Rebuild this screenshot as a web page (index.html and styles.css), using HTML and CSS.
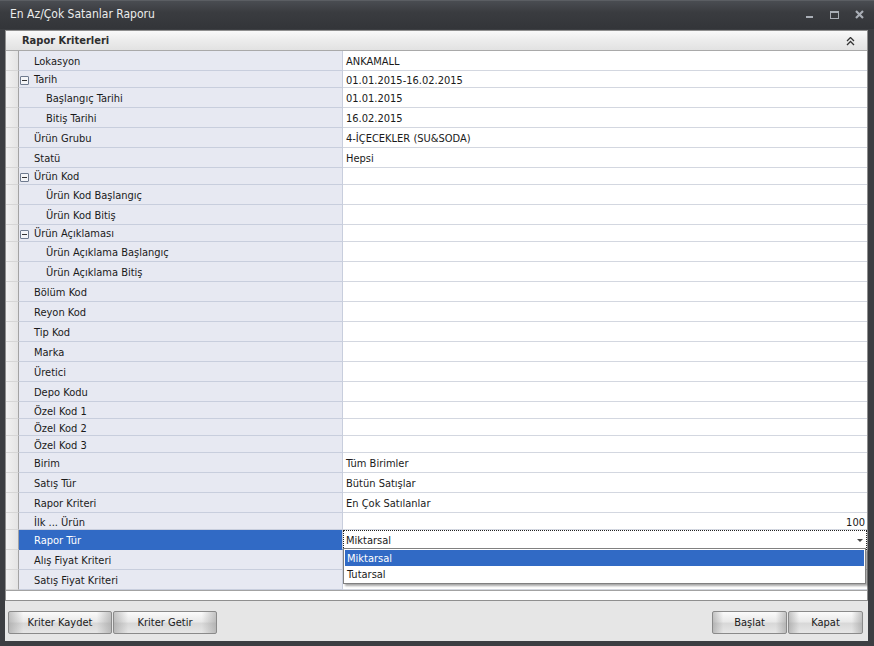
FILE: index.html
```html
<!DOCTYPE html>
<html lang="tr">
<head>
    <meta charset="UTF-8">
    <title>En Az/Çok Satanlar Raporu</title>
    <link rel="stylesheet" href="styles.css">
</head>
<body>

<div class="window">

    <!-- Title bar -->
    <div class="titlebar">
        <span class="title">En Az/Çok Satanlar Raporu</span>
        <div class="controls">
            <svg width="874" height="29" class="ctrl-svg">
                <rect x="806" y="16" width="7" height="2" fill="#a9aeb6"/>
                <rect x="830.5" y="11.5" width="8" height="7" fill="none" stroke="#a9aeb6"/>
                <rect x="830" y="11" width="9" height="2" fill="#a9aeb6"/>
                <path d="M856 11 L863 18 M863 11 L856 18" stroke="#a9aeb6" stroke-width="2.2"/>
            </svg>
        </div>
    </div>

    <div class="client">

        <!-- Criteria panel -->
        <div class="panel">
            <div class="panel-head">
                <span>Rapor Kriterleri</span>
                <svg class="collapse" width="9" height="9" viewBox="0 0 9 9">
                    <path d="M1 4 L4.5 0.5 L8 4 M1 8 L4.5 4.5 L8 8" fill="none" stroke="#333" stroke-width="1.3"/>
                </svg>
            </div>

            <div class="grid">
                <div class="row"><div class="ind"></div><div class="lbl">Lokasyon</div><div class="val">ANKAMALL</div></div>
                <div class="row short"><div class="ind"></div><div class="lbl grp"><span class="exp"></span>Tarih</div><div class="val">01.01.2015-16.02.2015</div></div>
                <div class="row"><div class="ind"></div><div class="lbl sub">Başlangıç Tarihi</div><div class="val">01.01.2015</div></div>
                <div class="row"><div class="ind"></div><div class="lbl sub">Bitiş Tarihi</div><div class="val">16.02.2015</div></div>
                <div class="row"><div class="ind"></div><div class="lbl">Ürün Grubu</div><div class="val">4-İÇECEKLER (SU&amp;SODA)</div></div>
                <div class="row"><div class="ind"></div><div class="lbl">Statü</div><div class="val">Hepsi</div></div>
                <div class="row short"><div class="ind"></div><div class="lbl grp"><span class="exp"></span>Ürün Kod</div><div class="val"></div></div>
                <div class="row"><div class="ind"></div><div class="lbl sub">Ürün Kod Başlangıç</div><div class="val"></div></div>
                <div class="row"><div class="ind"></div><div class="lbl sub">Ürün Kod Bitiş</div><div class="val"></div></div>
                <div class="row short"><div class="ind"></div><div class="lbl grp"><span class="exp"></span>Ürün Açıklaması</div><div class="val"></div></div>
                <div class="row"><div class="ind"></div><div class="lbl sub">Ürün Açıklama Başlangıç</div><div class="val"></div></div>
                <div class="row"><div class="ind"></div><div class="lbl sub">Ürün Açıklama Bitiş</div><div class="val"></div></div>
                <div class="row"><div class="ind"></div><div class="lbl">Bölüm Kod</div><div class="val"></div></div>
                <div class="row"><div class="ind"></div><div class="lbl">Reyon Kod</div><div class="val"></div></div>
                <div class="row"><div class="ind"></div><div class="lbl">Tip Kod</div><div class="val"></div></div>
                <div class="row"><div class="ind"></div><div class="lbl">Marka</div><div class="val"></div></div>
                <div class="row"><div class="ind"></div><div class="lbl">Üretici</div><div class="val"></div></div>
                <div class="row"><div class="ind"></div><div class="lbl">Depo Kodu</div><div class="val"></div></div>
                <div class="row short"><div class="ind"></div><div class="lbl">Özel Kod 1</div><div class="val"></div></div>
                <div class="row short"><div class="ind"></div><div class="lbl">Özel Kod 2</div><div class="val"></div></div>
                <div class="row short"><div class="ind"></div><div class="lbl">Özel Kod 3</div><div class="val"></div></div>
                <div class="row"><div class="ind"></div><div class="lbl">Birim</div><div class="val">Tüm Birimler</div></div>
                <div class="row"><div class="ind"></div><div class="lbl">Satış Tür</div><div class="val">Bütün Satışlar</div></div>
                <div class="row"><div class="ind"></div><div class="lbl">Rapor Kriteri</div><div class="val">En Çok Satılanlar</div></div>
                <div class="row short"><div class="ind"></div><div class="lbl">İlk ... Ürün</div><div class="val num">100</div></div>
                <div class="row sel">
                    <div class="ind"></div>
                    <div class="lbl">Rapor Tür</div>
                    <div class="val editing">
                        Miktarsal
                        <span class="arrow"></span>
                        <!-- open dropdown -->
                        <div class="dropdown">
                            <div class="opt active">Miktarsal</div>
                            <div class="opt">Tutarsal</div>
                        </div>
                    </div>
                </div>
                <div class="row"><div class="ind"></div><div class="lbl">Alış Fiyat Kriteri</div><div class="val"></div></div>
                <div class="row"><div class="ind"></div><div class="lbl">Satış Fiyat Kriteri</div><div class="val"></div></div>
            </div>
            <div class="panel-gap"></div>
        </div>

        <!-- Buttons -->
        <div class="footer">
            <div class="btn-group">
                <button class="btn wide">Kriter Kaydet</button>
                <button class="btn wide">Kriter Getir</button>
            </div>
            <div class="btn-group">
                <button class="btn">Başlat</button>
                <button class="btn">Kapat</button>
            </div>
        </div>
    </div>
</div>

</body>
</html>
```

FILE: styles.css
```css
body {
    margin: 0;
    font-family: "DejaVu Sans Condensed", "DejaVu Sans", sans-serif;
    font-stretch: condensed;
    font-size: 11px;
    color: #1a1a1a;
}

.window {
    width: 874px;
    height: 646px;
    background-color: #3c3e42;
    display: flex;
    flex-direction: column;
    overflow: hidden;
}

/* Title bar */
.titlebar {
    height: 29px;
    flex: none;
    position: relative;
    background: linear-gradient(#4a4d52, #3a3c40 40%, #333539);
    border-top: 1px solid #5b5e63;
    box-sizing: border-box;
}

.title {
    position: absolute;
    left: 10px;
    top: 6px;
    font-size: 12px;
    color: #ececec;
}

.ctrl-svg {
    position: absolute;
    left: 0;
    top: -1px;
}

.client {
    flex: 1;
    margin: 1px 6px 5px 5px;
    background-color: #e6e6e6;
    display: flex;
    flex-direction: column;
}

/* Panel */
.panel {
    border: 1px solid #8f8f8f;
    background-color: white;
}

.panel-head {
    height: 19px;
    border-bottom: 1px solid #a9a9a9;
    background: linear-gradient(#fafafa, #ececec 50%, #e2e2e2);
    display: flex;
    align-items: center;
    justify-content: space-between;
    padding: 0 12px 0 16px;
    font-weight: bold;
    color: #2e2e2e;
}

.collapse {
    margin-top: 1px;
}

.grid {
    border-bottom: 1px solid #a3a3a3;
}

.row {
    display: flex;
    height: 20px;
    line-height: 21px;
}

.row.short {
    height: 17px;
    line-height: 19px;
}

.row > div {
    box-sizing: border-box;
}

.ind {
    width: 13px;
    flex: none;
    background: linear-gradient(to right, #f2f2f2, #e4e4e4);
    border-bottom: 1px solid #d6d6d6;
    border-right: 1px solid #a3a3a3;
}

.lbl {
    width: 324px;
    flex: none;
    padding-left: 15px;
    background-color: #e7e9f2;
    border-bottom: 1px solid #c8cedd;
    border-right: 1px solid #c8cedd;
    white-space: nowrap;
}

.lbl.sub {
    padding-left: 27px;
}

.lbl.grp {
    padding-left: 1px;
    padding-top: 2px;
    display: flex;
    align-items: center;
    line-height: 14px;
}

.exp {
    width: 9px;
    height: 9px;
    box-sizing: border-box;
    border: 1px solid #6f7b8f;
    border-radius: 1px;
    margin-right: 5px;
    position: relative;
    background-color: #f4f5f8;
}

.exp::after {
    content: "";
    position: absolute;
    left: 1px;
    top: 3px;
    width: 5px;
    height: 1px;
    background-color: #333;
}

.val {
    flex: 1;
    padding-left: 3px;
    border-bottom: 1px solid #d3d7e0;
    white-space: nowrap;
    position: relative;
}

.val.num {
    text-align: right;
    padding-right: 2px;
}

.row.sel .lbl {
    background-color: #316ac5;
    color: white;
    border-bottom-color: #316ac5;
}

.val.editing {
    outline: 1px dotted #222;
    outline-offset: -1px;
}

.arrow {
    position: absolute;
    right: 4px;
    top: 9px;
    border-left: 3px solid transparent;
    border-right: 3px solid transparent;
    border-top: 3px solid #444;
}

/* Open dropdown list */
.dropdown {
    position: absolute;
    left: 0;
    right: 1px;
    top: 18px;
    z-index: 2;
    background-color: white;
    border: 1px solid #808080;
    padding: 1px;
    box-shadow: 2px 2px 2px rgba(0, 0, 0, 0.35);
}

.opt {
    height: 16px;
    line-height: 17px;
    padding-left: 2px;
}

.opt.active {
    background-color: #316ac5;
    color: white;
}

.panel-gap {
    height: 9px;
}

/* Footer buttons */
.footer {
    flex: 1;
    display: flex;
    justify-content: space-between;
    align-items: flex-start;
    padding: 10px 5px 0 3px;
}

.btn-group {
    display: flex;
    gap: 1px;
}

.btn {
    width: 75px;
    height: 23px;
    font-family: inherit;
    font-size: 11px;
    color: #1a1a1a;
    border: 1px solid #8a8a8a;
    border-radius: 2px;
    background: linear-gradient(to right, rgba(150,150,150,0.55), rgba(255,255,255,0) 14%, rgba(255,255,255,0) 86%, rgba(150,150,150,0.55)),
                linear-gradient(#fbfbfb, #e9e9e9 45%, #d8d8d8 55%, #e6e6e6);
    padding: 0;
}

.btn.wide {
    width: 104px;
}
```
